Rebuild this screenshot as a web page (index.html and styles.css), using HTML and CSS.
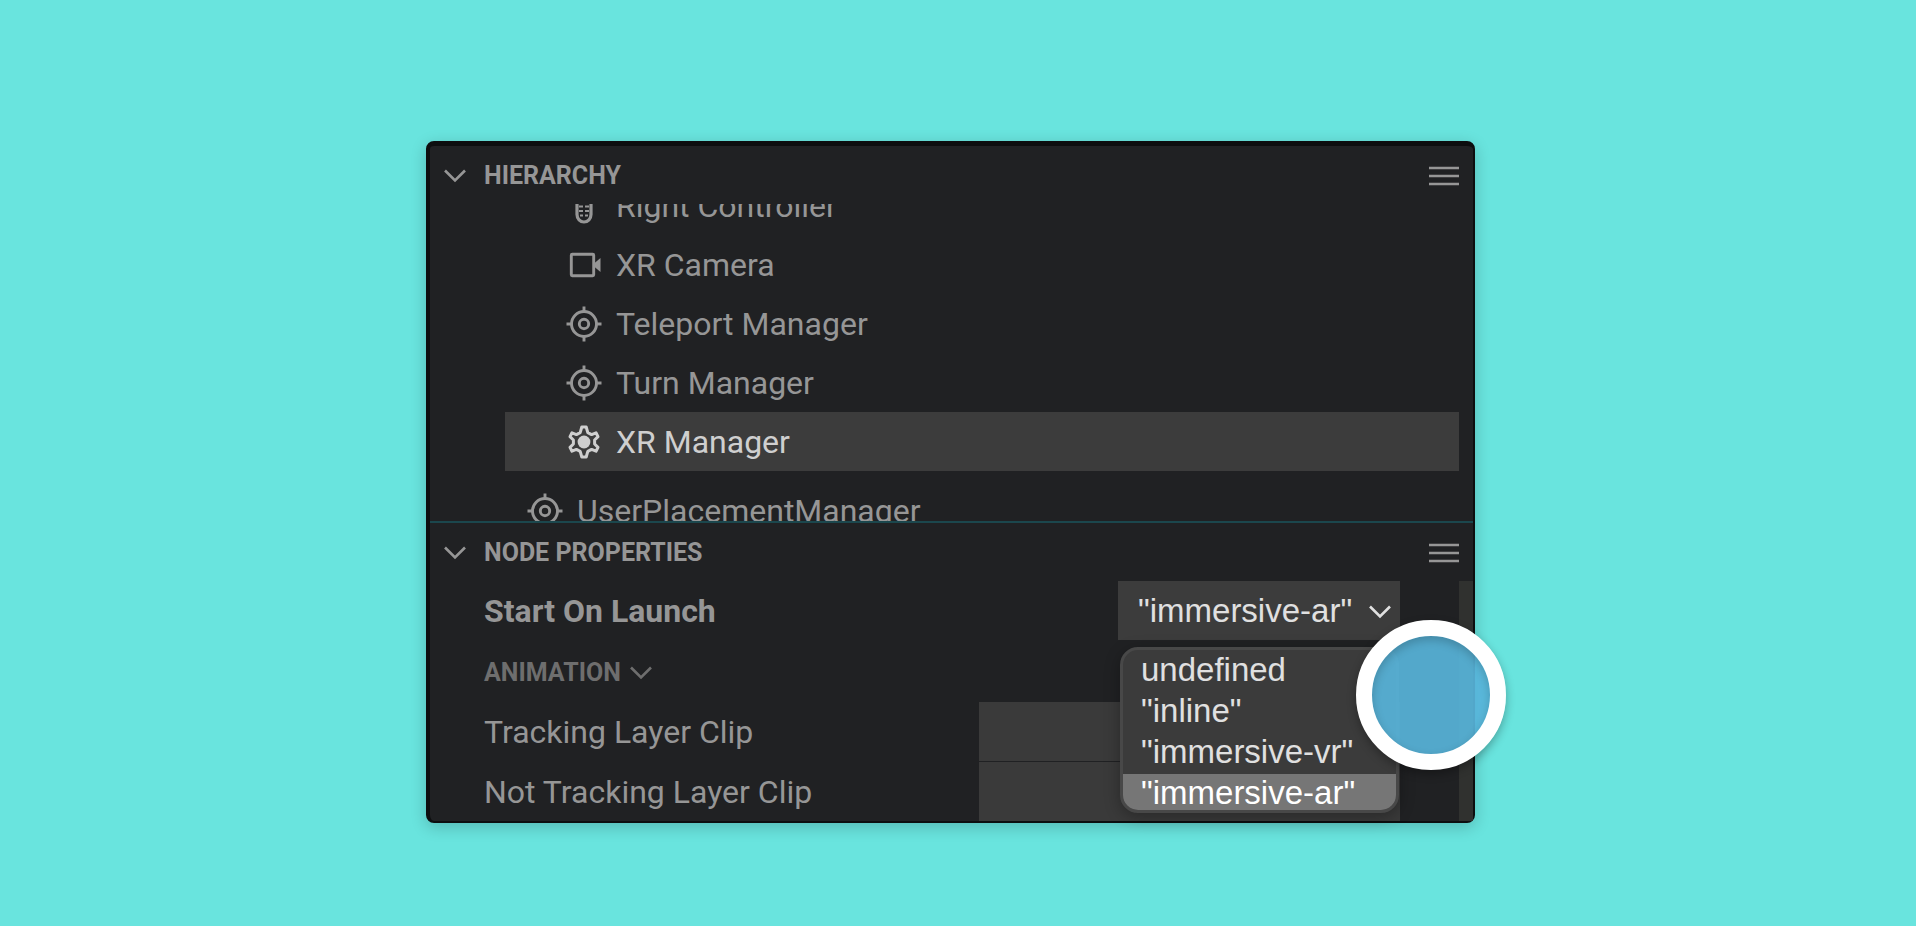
FILE: index.html
```
<!DOCTYPE html>
<html lang="en">

<head>
    <meta charset="UTF-8">
    <title>XR Manager</title>
    <link rel="stylesheet" href="styles.css">
</head>

<body>
    <!-- shared icons -->
    <svg class="defs" aria-hidden="true">
        <symbol id="chevron" viewBox="0 0 24 24">
            <path d="M2 7.5L12 17.5L22 7.5" fill="none" stroke="currentColor" stroke-width="2.6" />
        </symbol>
        <symbol id="menu" viewBox="0 0 30 24">
            <path d="M0 5H30M0 13H30M0 21H30" fill="none" stroke="currentColor" stroke-width="2.4" />
        </symbol>
        <symbol id="target" viewBox="0 0 36 36">
            <g fill="none" stroke="currentColor" stroke-width="2.9">
                <circle cx="18" cy="18" r="12.5" />
                <circle cx="18" cy="18" r="4.7" />
                <path d="M18 0.5V6M18 30V35.5M0.5 18H6M30 18H35.5" />
            </g>
        </symbol>
    </svg>

    <main class="panel">
        <section>
            <header class="head">
                <button class="toggle" aria-label="Collapse hierarchy"><svg><use href="#chevron" /></svg></button>
                <h2>HIERARCHY</h2>
                <button class="menu" aria-label="Hierarchy menu"><svg><use href="#menu" /></svg></button>
            </header>
            <div class="view">
                <ul class="tree">
                    <li>
                        <svg viewBox="0 0 36 36">
                            <path d="M11 4V26.5A7 7.5 0 0 0 25 26.5V4Z" fill="none" stroke="currentColor" stroke-width="3.2" />
                            <path d="M13 14H17M19 14H23M13 18.5H17M19 18.5H23M13 23H17M19 23H23M14 27.5H17M19 27.5H22" stroke="currentColor" stroke-width="2.2" />
                        </svg>
                        <span>Right Controller</span>
                    </li>
                    <li>
                        <svg viewBox="0 0 36 36">
                            <rect x="5.3" y="7.3" width="22.4" height="21.4" rx="1" fill="none" stroke="currentColor" stroke-width="2.9" />
                            <path d="M28 16.5L34.5 11V25L28 19.5Z" fill="currentColor" />
                        </svg>
                        <span>XR Camera</span>
                    </li>
                    <li>
                        <svg><use href="#target" /></svg>
                        <span>Teleport Manager</span>
                    </li>
                    <li>
                        <svg><use href="#target" /></svg>
                        <span>Turn Manager</span>
                    </li>
                    <li class="active">
                        <svg viewBox="0 0 36 36">
                            <path d="M15.8 3H20.2L21.8 8.6L25.6 10.6L30 8.8L32 12.6L28.6 16V20L32 23.4L30 27.2L25.6 25.4L21.8 27.4L20.2 33H15.8L14.2 27.4L10.4 25.4L6 27.2L4 23.4L7.4 20V16L4 12.6L6 8.8L10.4 10.6L14.2 8.6Z" fill="none" stroke="currentColor" stroke-width="3" stroke-linejoin="round" />
                            <circle cx="18" cy="18" r="6.4" fill="currentColor" />
                        </svg>
                        <span>XR Manager</span>
                    </li>
                    <li class="parent">
                        <svg><use href="#target" /></svg>
                        <span>UserPlacementManager</span>
                    </li>
                </ul>
            </div>
        </section>

        <section class="node">
            <header class="head">
                <button class="toggle" aria-label="Collapse node properties"><svg><use href="#chevron" /></svg></button>
                <h2>NODE PROPERTIES</h2>
                <button class="menu" aria-label="Node properties menu"><svg><use href="#menu" /></svg></button>
            </header>
            <div class="props">
                <form class="fields">
                    <div class="row">
                        <label class="strong" for="launch">Start On Launch</label>
                        <div class="dropdown">
                            <select id="launch">
                                <option>undefined</option>
                                <option>"inline"</option>
                                <option>"immersive-vr"</option>
                                <option selected>"immersive-ar"</option>
                            </select>
                            <svg><use href="#chevron" /></svg>
                            <ul class="options" role="listbox" aria-label="Start On Launch">
                                <li role="option">undefined</li>
                                <li role="option">"inline"</li>
                                <li role="option">"immersive-vr"</li>
                                <li role="option" aria-selected="true" class="picked">"immersive-ar"</li>
                            </ul>
                        </div>
                    </div>
                    <button type="button" class="group">ANIMATION <svg><use href="#chevron" /></svg></button>
                    <div class="row">
                        <label for="clip1">Tracking Layer Clip</label>
                        <input id="clip1" type="text">
                    </div>
                    <div class="row">
                        <label for="clip2">Not Tracking Layer Clip</label>
                        <input id="clip2" type="text">
                    </div>
                </form>
                <div class="scrollbar"></div>
            </div>
        </section>
        <div class="pointer"></div>
    </main>
</body>

</html>
```

FILE: styles.css
```
* {
    margin: 0;
    padding: 0;
    box-sizing: border-box;
}

body {
    min-height: 100vh;
    padding: 141px 441px 103px 426px;
    background-color: #69e4de;
    font-family: Roboto, sans-serif;
    font-size: 32px;
    color: #969696;
}

ul {
    list-style: none;
}

button,
input,
select {
    border: 0;
    background: none;
    color: inherit;
    font: inherit;
}

svg {
    display: block;
}

.defs {
    position: absolute;
    width: 0;
    height: 0;
}

.panel {
    position: relative;
    border: solid #0d0e0f;
    border-width: 5px 2px 2px 4px;
    border-radius: 8px;
    background-color: #202123;
    box-shadow: 0 4px 16px rgba(0, 0, 0, 0.2);
}

/* section headers */
.head {
    display: flex;
    align-items: center;
    height: 58px;
    padding: 0 14px 0 13px;
}

.head h2 {
    flex: 1;
    font-size: 25px;
    font-weight: 700;
}

.toggle {
    width: 41px;
}

.toggle svg {
    width: 24px;
    height: 24px;
}

.menu svg {
    width: 30px;
    height: 24px;
}

/* hierarchy */
.view {
    height: 317px;
    overflow: hidden;
}

.tree {
    margin-top: -28px;
    padding: 0 14px 0 75px;
}

.tree li {
    display: flex;
    align-items: center;
    gap: 14px;
    height: 59px;
    padding-left: 61px;
}

.tree svg {
    width: 36px;
    height: 36px;
}

.tree .active {
    background-color: #3c3c3c;
    color: #cfcfcf;
}

.tree .parent {
    margin-top: 10px;
    padding-left: 22px;
}

/* node properties */
.node {
    border-top: 2px solid #1b474d;
}

.props {
    display: flex;
}

.fields {
    flex: 1;
    padding: 0 59px 0 54px;
}

.scrollbar {
    width: 14px;
    background-color: #30312f;
}

.row {
    display: flex;
    align-items: center;
    justify-content: space-between;
    height: 59px;
}

.row + .row {
    margin-top: 1px;
}

.row input {
    width: 421px;
    height: 59px;
    padding: 0 16px;
    background-color: #3a3a3a;
}

.strong {
    font-weight: 700;
}

.group {
    display: flex;
    align-items: center;
    gap: 8px;
    height: 62px;
    padding-top: 2px;
    font-size: 25px;
    font-weight: 700;
    color: #6e6e6e;
}

.group svg {
    width: 24px;
    height: 24px;
}

.dropdown {
    position: relative;
    width: 282px;
    font-family: "Liberation Sans", Arial, sans-serif;
    font-size: 33px;
    color: #e0e0e0;
}

.dropdown select {
    display: block;
    width: 100%;
    height: 59px;
    padding: 0 20px;
    appearance: none;
    background-color: #3c3c3c;
}

.dropdown > svg {
    position: absolute;
    top: 18px;
    right: 8px;
    width: 24px;
    height: 24px;
    pointer-events: none;
}

.options {
    position: absolute;
    top: 66px;
    left: 2px;
    right: 1px;
    z-index: 1;
    overflow: hidden;
    padding-top: 1px;
    border: 3px solid #484848;
    border-radius: 18px;
    background-color: #3b3b3b;
    box-shadow: 0 4px 16px rgba(0, 0, 0, 0.3);
}

.options li {
    height: 41px;
    padding-left: 18px;
    line-height: 38px;
}

.options .picked {
    height: 36px;
    background-color: #767676;
    color: #fff;
}

/* click marker */
.pointer {
    position: absolute;
    right: -33px;
    bottom: 51px;
    z-index: 2;
    width: 150px;
    height: 150px;
    border: 16px solid #fff;
    border-radius: 50%;
    background-color: rgba(88, 180, 218, 0.92);
    box-shadow: 0 4px 10px rgba(0, 0, 0, 0.3), inset 0 4px 10px rgba(0, 0, 0, 0.2);
}
```
